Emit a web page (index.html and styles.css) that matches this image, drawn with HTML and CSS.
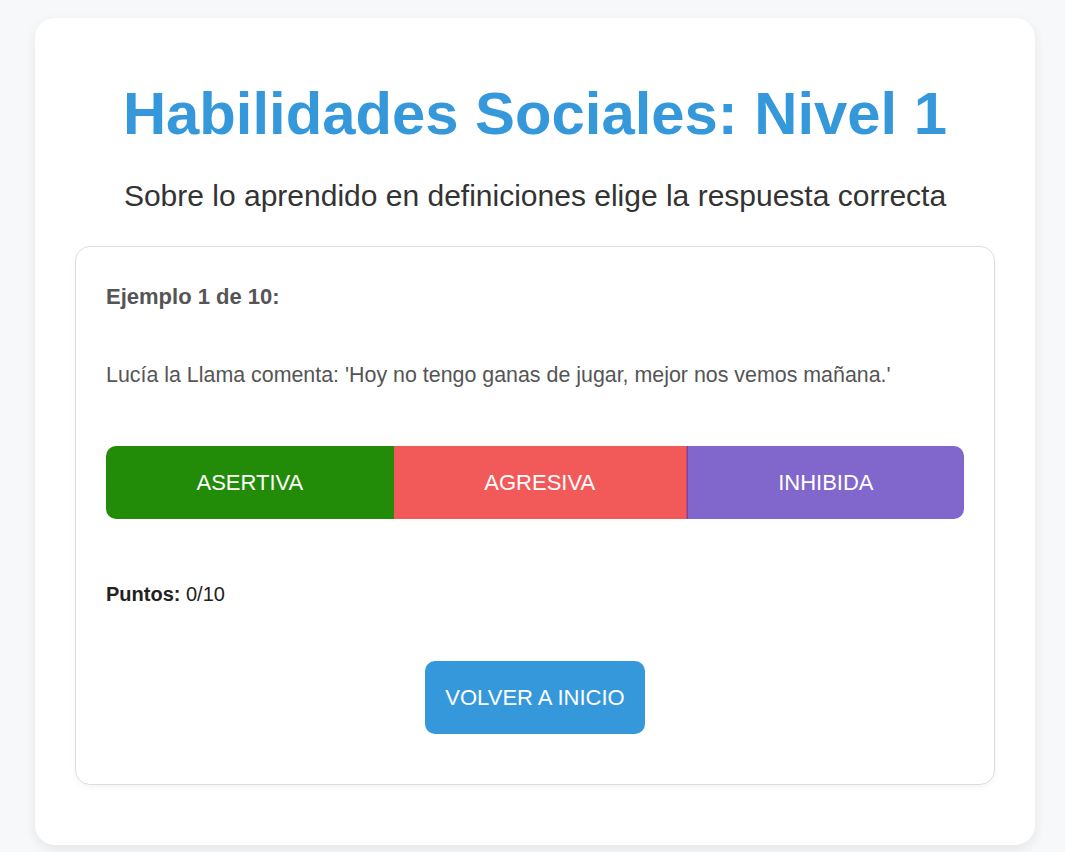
FILE: index.html
```html
<!DOCTYPE html>
<html lang="es">
<head>
<meta charset="utf-8">
<title>Habilidades Sociales: Nivel 1</title>
<link rel="stylesheet" href="styles.css">
</head>
<body>
<main class="container">
  <h1 class="title">Habilidades Sociales: Nivel 1</h1>
  <p class="subtitle">Sobre lo aprendido en definiciones elige la respuesta correcta</p>
  <section class="quiz">
    <p class="example">Ejemplo 1 de 10:</p>
    <p class="statement">Lucía la Llama comenta: 'Hoy no tengo ganas de jugar, mejor nos vemos mañana.'</p>
    <div class="options">
      <button class="option option-green">ASERTIVA</button>
      <button class="option option-red">AGRESIVA</button>
      <button class="option option-purple">INHIBIDA</button>
    </div>
    <p class="score"><strong>Puntos:</strong> 0/10</p>
    <div class="actions">
      <button class="home-btn">VOLVER A INICIO</button>
    </div>
  </section>
</main>
</body>
</html>
```
FILE: styles.css
```css
* { box-sizing: border-box; }
html, body { margin: 0; padding: 0; }
body {
  background: #f7f8fa;
  font-family: "Liberation Sans", Arial, sans-serif;
  color: #333;
  padding: 18px 30px 8px 35px;
}
.container {
  width: 1000px;
  background: #fff;
  border-radius: 20px;
  box-shadow: 0 4px 12px rgba(0, 0, 0, 0.08);
  padding: 62px 40px 60px;
}
.title {
  margin: 0;
  text-align: center;
  font-size: 59.8px;
  font-weight: bold;
  color: #3498db;
  line-height: 67px;
}
.subtitle {
  margin: 32px 0 33px;
  text-align: center;
  font-size: 30px;
  line-height: 34px;
  color: #333;
}
.quiz {
  border: 1px solid #ddd;
  border-radius: 15px;
  padding: 30px 30px 50px;
  box-shadow: 0 2px 6px rgba(0, 0, 0, 0.05);
}
.example {
  margin: 7px 0 0;
  font-size: 22px;
  font-weight: bold;
  color: #555;
  line-height: 25px;
}
.statement {
  margin: 54px 0 0;
  font-size: 21.4px;
  line-height: 25px;
  color: #555;
}
.options {
  display: flex;
  margin-top: 58px;
}
.option {
  flex: 1 1 auto;
  border: none;
  color: #fff;
  font-family: inherit;
  font-size: 22px;
  line-height: 23px;
  padding: 25px 20px;
  margin: 0;
}
.option-green { background: #228b08; border-radius: 10px 0 0 10px; }
.option-red { background: #f25a5a; border-right: 1px solid #d84848; }
.option-purple { background: #8166cc; border-left: 1px solid #6a44c4; border-radius: 0 10px 10px 0; }
.score {
  margin: 64px 0 0;
  font-size: 20px;
  line-height: 23px;
  color: #222;
}
.actions {
  display: flex;
  justify-content: center;
  margin-top: 55px;
}
.home-btn {
  background: #3498db;
  color: #fff;
  border: none;
  border-radius: 10px;
  font-family: inherit;
  font-size: 22px;
  line-height: 23px;
  padding: 25px 20px;
}
```
